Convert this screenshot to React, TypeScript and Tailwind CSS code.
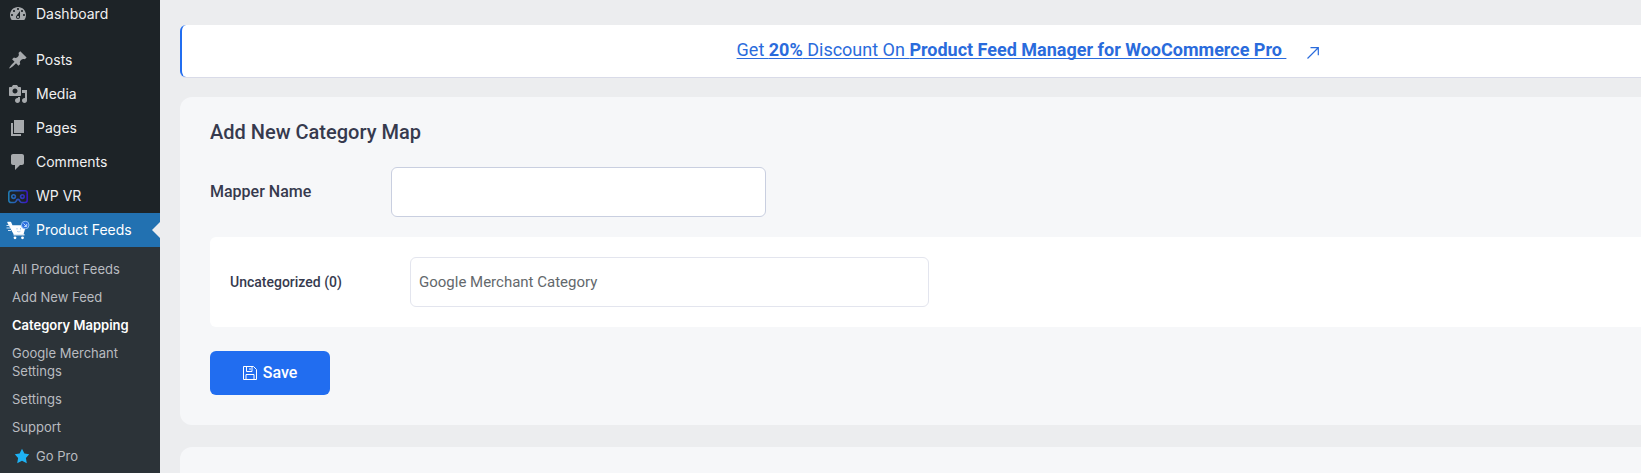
import type { ReactNode } from "react";

type MenuItem = {
  label: string;
  icon: ReactNode;
};

function Dashicon({ d, className = "h-5 w-5" }: { d: string; className?: string }) {
  return (
    <svg viewBox="0 0 20 20" className={className} fill="currentColor" aria-hidden="true">
      <path d={d} />
    </svg>
  );
}

function VrIcon() {
  return (
    <svg viewBox="0 0 20 20" className="h-5 w-5" fill="none" aria-hidden="true">
      <defs>
        <linearGradient id="vr" x1="0" y1="0" x2="20" y2="0" gradientUnits="userSpaceOnUse">
          <stop offset="0" stopColor="#1f7cb0" />
          <stop offset="0.5" stopColor="#2a52b8" />
          <stop offset="1" stopColor="#3a12c4" />
        </linearGradient>
      </defs>
      <g stroke="url(#vr)" strokeWidth="1.6">
        <path d="M3 4.7h14a2.2 2.2 0 0 1 2.2 2.2v7.4a2.2 2.2 0 0 1-2.2 2.2h-3.2c-1 0-1.5-.5-2-1.4l-.6-1.1c-.5-.8-1.9-.8-2.4 0l-.6 1.1c-.5.9-1 1.4-2 1.4H3a2.2 2.2 0 0 1-2.2-2.2V6.9A2.2 2.2 0 0 1 3 4.7z" />
        <circle cx="5.6" cy="10.6" r="1.8" />
        <circle cx="14.4" cy="10.6" r="1.8" />
      </g>
    </svg>
  );
}

function CartIcon() {
  return (
    <svg viewBox="0 0 24 20" className="h-5 w-6" fill="none" aria-hidden="true">
      <path d="M2 2.5h2.5L6 6h13l-2 7.5H8z" fill="#fff" stroke="#fff" strokeWidth="1.5" strokeLinejoin="round" />
      <path d="M.5 5.5h3M.5 8h4M2 10.5h3" stroke="#cfe2f5" strokeWidth="1" />
      <path d="M7.5 14.8h11" stroke="#fff" strokeWidth="1.2" />
      <circle cx="9" cy="17.8" r="1.4" fill="#fff" />
      <circle cx="16.5" cy="17.8" r="1.4" fill="#fff" />
      <path d="M11 8v1.5M14.5 8v1.5M11 11.2c1 .8 2.5.8 3.5 0" stroke="#8db6e2" strokeWidth=".8" />
      <circle cx="19.2" cy="5" r="3.8" fill="#2d6fdf" stroke="#8fc0f5" strokeWidth="1" />
      <path d="M17.5 3.5l3 3M20.7 4v2.5h-2.5" stroke="#b9d8fa" strokeWidth="1" />
    </svg>
  );
}

const dashboardIcon =
  "M3.76 16h12.48c1.1-1.37 1.76-3.11 1.76-5 0-4.42-3.58-8-8-8s-8 3.58-8 8c0 1.89.66 3.63 1.76 5zM10 4c.55 0 1 .45 1 1s-.45 1-1 1-1-.45-1-1 .45-1 1-1zM6 6c.55 0 1 .45 1 1s-.45 1-1 1-1-.45-1-1 .45-1 1-1zm8 0c.55 0 1 .45 1 1s-.45 1-1 1-1-.45-1-1 .45-1 1-1zm-5.37 5.55L12 7v6c0 1.1-.9 2-2 2s-2-.9-2-2c0-.57.24-1.08.63-1.45zM4 10c.55 0 1 .45 1 1s-.45 1-1 1-1-.45-1-1 .45-1 1-1zm12 0c.55 0 1 .45 1 1s-.45 1-1 1-1-.45-1-1 .45-1 1-1zm-5 3c0-.55-.45-1-1-1s-1 .45-1 1 .45 1 1 1 1-.45 1-1z";

const menu: MenuItem[] = [
  {
    label: "Posts",
    icon: (
      <Dashicon d="M10.44 3.02l1.82-1.82 6.36 6.35-1.83 1.82c-1.05-.68-2.48-.57-3.41.36l-.75.75c-.92.93-1.04 2.35-.35 3.41l-1.83 1.82-2.41-2.41-2.8 2.79c-.42.42-3.38 2.71-3.8 2.29s1.86-3.39 2.28-3.81l2.79-2.79L4.1 9.36l1.83-1.82c1.05.69 2.48.57 3.4-.36l.75-.75c.93-.92 1.05-2.35.36-3.41z" />
    ),
  },
  {
    label: "Media",
    icon: (
      <Dashicon d="M13 11V4c0-.55-.45-1-1-1h-1.67L9 1H5L3.67 3H2c-.55 0-1 .45-1 1v7c0 .55.45 1 1 1h10c.55 0 1-.45 1-1zM7 4.5c1.38 0 2.5 1.12 2.5 2.5S8.38 9.5 7 9.5 4.5 8.38 4.5 7 5.62 4.5 7 4.5zM14 6h5v10.5c0 1.38-1.12 2.5-2.5 2.5S14 17.88 14 16.5s1.12-2.5 2.5-2.5c.17 0 .34.02.5.05V9h-3V6zm-4 8.05V13h2v3.5c0 1.38-1.12 2.5-2.5 2.5S7 17.88 7 16.5 8.12 14 9.5 14c.17 0 .34.02.5.05z" />
    ),
  },
  { label: "Pages", icon: <Dashicon d="M6 15V2h10v13H6zm-1 1h8v2H3V5h2v11z" /> },
  {
    label: "Comments",
    icon: <Dashicon d="M5 2h9c1.1 0 2 .9 2 2v7c0 1.1-.9 2-2 2h-2l-5 5v-5H5c-1.1 0-2-.9-2-2V4c0-1.1.9-2 2-2z" />,
  },
  { label: "WP VR", icon: <VrIcon /> },
];

const submenu = [
  "All Product Feeds",
  "Add New Feed",
  "Category Mapping",
  "Google Merchant Settings",
  "Settings",
  "Support",
];

function Sidebar() {
  return (
    <nav className="flex w-40 shrink-0 flex-col bg-[#1d2327] font-['Inter',sans-serif] text-sm text-[#f0f0f1]">
      <a href="#dashboard" className="mb-[15px] flex h-7 items-center">
        <span className="flex w-9 justify-center text-[#a7aaad]">
          <Dashicon d={dashboardIcon} />
        </span>
        Dashboard
      </a>

      {menu.map((item) => (
        <a key={item.label} href="#" className="flex h-[34px] items-center">
          <span className="flex w-9 justify-center text-[#a7aaad]">{item.icon}</span>
          {item.label}
        </a>
      ))}

      <a href="#feeds" className="relative flex h-[34px] items-center bg-[#2271b1] text-white">
        <span className="flex w-9 justify-center">
          <CartIcon />
        </span>
        Product Feeds
        {/* current item pointer */}
        <span className="absolute top-1/2 right-0 -translate-y-1/2 border-y-8 border-r-8 border-y-transparent border-r-[#ecedef]" />
      </a>

      <div className="flex grow flex-col bg-[#2c3338] pt-2 text-[13px] leading-[18px] text-[#b9bcc0]">
        {submenu.map((label) => (
          <a
            key={label}
            href="#"
            className={label === "Category Mapping" ? "px-3 py-[5px] font-semibold text-white" : "px-3 py-[5px]"}
          >
            {label}
          </a>
        ))}
        <a href="#pro" className="flex items-center gap-1.5 px-3 py-1.5">
          <Dashicon
            className="ml-0.5 h-4 w-4 text-[#1eb2f4]"
            d="M10 1l3 6 6 .75-4.12 4.62L16 19l-6-3-6 3 1.13-6.63L1 7.75 7 7z"
          />
          Go Pro
        </a>
      </div>
    </nav>
  );
}

function PromoBanner() {
  return (
    <div className="flex h-[52px] items-center justify-center rounded-l-md border-l-2 border-[#216df0] bg-white pb-0.5 pl-[234px] text-lg text-[#2a6bdc] shadow-[0_1px_0_#d9dbe8]">
      <a href="#discount" className="flex items-center gap-5">
        <span className="whitespace-pre underline underline-offset-2 [text-decoration-skip-ink:none]">
          Get <b>20%</b> Discount On <b>Product Feed Manager for WooCommerce Pro </b>
        </span>
        <svg viewBox="0 0 14 14" className="mt-1.5 h-3.5 w-3.5" fill="none" stroke="currentColor" strokeWidth="1.2" aria-hidden="true">
          <path d="M1.5 12.5L12 2M4.5 1.7h7.8v7.6" />
        </svg>
      </a>
    </div>
  );
}

function SaveIcon() {
  return (
    <svg viewBox="0 0 14 14" className="h-3.5 w-3.5" fill="none" stroke="currentColor" strokeLinejoin="round" aria-hidden="true">
      <path d="M.5.5h10l3 3v10H.5z" />
      <path d="M3.5.5v5H9v-5M3 13.5v-5h8v5M7 2v2" />
    </svg>
  );
}

export default function App() {
  return (
    <div className="flex min-h-screen bg-[#ecedef] font-['Roboto',sans-serif] text-[#363a4e]">
      <Sidebar />

      <main className="flex min-w-0 grow flex-col gap-5 pt-[25px] pl-5">
        <PromoBanner />

        <form className="rounded-l-xl bg-[#f6f7f9] pt-5 pb-[30px] pl-[30px]">
          <h1 className="text-xl leading-[30px] font-medium">Add New Category Map</h1>

          <div className="mt-5 flex items-center">
            <label htmlFor="mapper-name" className="w-[181px] shrink-0 font-medium">
              Mapper Name
            </label>
            <input
              id="mapper-name"
              type="text"
              className="h-[50px] w-[375px] rounded-md border border-[#c9cfe0] bg-white px-3 outline-none"
            />
          </div>

          <div className="mt-5 flex items-center rounded-l-md bg-white p-5">
            <label htmlFor="category" className="w-[180px] shrink-0 text-sm font-medium">
              Uncategorized (0)
            </label>
            <input
              id="category"
              type="text"
              placeholder="Google Merchant Category"
              className="h-[50px] w-[519px] rounded-md border border-[#e3e5ee] bg-white px-2 text-[15px] outline-none placeholder:text-[#63686c]"
            />
          </div>

          <button
            type="submit"
            className="mt-6 flex h-11 w-[120px] items-center justify-center gap-1.5 rounded-md bg-[#216df0] font-medium text-white"
          >
            <SaveIcon />
            Save
          </button>
        </form>

        <section className="mt-0.5 grow rounded-tl-xl bg-[#f6f7f9]" />
      </main>
    </div>
  );
}
